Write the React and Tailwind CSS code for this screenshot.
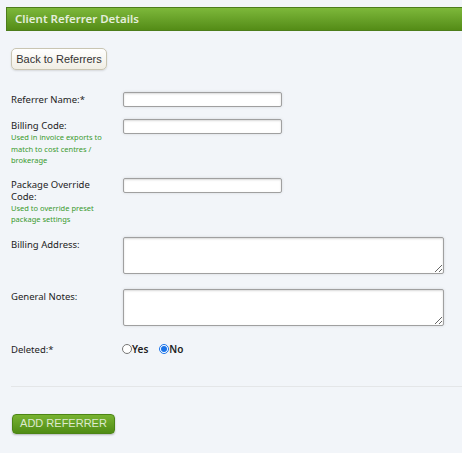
import React, { useState } from 'react';

const Help = ({ children }) => (
  <p className="text-[7.5px] leading-[11.5px] text-[#3a9a2e] w-[92px]">{children}</p>
);

const inputCls =
  "w-[159px] h-[15px] bg-white border border-[#a0a0a0] rounded-[2px] shadow-[inset_0_1px_2px_rgba(0,0,0,0.15),0_0_3px_rgba(0,0,0,0.12)] outline-none";
const areaCls =
  "w-[321px] h-[37px] bg-white border border-[#a0a0a0] rounded-[2px] shadow-[inset_0_1px_2px_rgba(0,0,0,0.15),0_0_3px_rgba(0,0,0,0.12)] outline-none resize";

const App = () => {
  const [deleted, setDeleted] = useState('no');

  return (
    <div className="min-h-screen w-full bg-[#f2f5f9] font-['Noto_Sans',sans-serif] text-[#222] overflow-hidden">
      <div className="pt-[7px] pl-[6px]">
        {/* Header bar */}
        <div className="h-[24px] border border-[#4d7d1c] border-r-0 bg-gradient-to-b from-[#7db83a] to-[#548c16] flex items-center pl-[8px]">
          <h1 className="text-[11.5px] font-semibold text-[#e4eedc]">Client Referrer Details</h1>
        </div>
      </div>

      <div className="pl-[11px]">
        {/* Back button */}
        <button
          type="button"
          className="mt-[17px] h-[22px] w-[96px] rounded-[5px] border border-[#c9c5b2] bg-gradient-to-b from-white to-[#f1eee4] shadow-[0_1px_2px_rgba(0,0,0,0.12)] font-['Liberation_Sans',sans-serif] text-[11px] text-[#333]"
        >
          Back to Referrers
        </button>

        <form className="mt-[22px] flex flex-col">
          {/* Referrer name */}
          <div className="flex items-start">
            <label className="w-[112px] text-[9.5px] leading-[13px] pt-[1px]">Referrer Name:*</label>
            <input type="text" className={inputCls} />
          </div>

          {/* Billing code */}
          <div className="flex items-start mt-[12px]">
            <div className="w-[112px]">
              <label className="text-[9.5px] leading-[12px] block pt-[1px]">Billing Code:</label>
              <Help>Used in invoice exports to match to cost centres / brokerage</Help>
            </div>
            <input type="text" className={inputCls} />
          </div>

          {/* Package override */}
          <div className="flex items-start mt-[11px]">
            <div className="w-[112px]">
              <label className="text-[9.5px] leading-[12px] block pt-[1px] w-[100px]">Package Override Code:</label>
              <Help>Used to override preset package settings</Help>
            </div>
            <input type="text" className={inputCls} />
          </div>

          {/* Billing address */}
          <div className="flex items-start mt-[11px]">
            <label className="w-[112px] text-[9.5px] leading-[13px] pt-[1px]">Billing Address:</label>
            <textarea className={areaCls} />
          </div>

          {/* General notes */}
          <div className="flex items-start mt-[15px]">
            <label className="w-[112px] text-[9.5px] leading-[13px] pt-[1px]">General Notes:</label>
            <textarea className={areaCls} />
          </div>

          {/* Deleted */}
          <div className="flex items-center mt-[16px]">
            <label className="w-[111px] text-[9.5px] leading-[13px]">Deleted:*</label>
            <label className="flex items-center text-[10px] font-semibold">
              <input
                type="radio"
                name="deleted"
                checked={deleted === 'yes'}
                onChange={() => setDeleted('yes')}
                className="w-[10px] h-[10px] m-0 accent-[#1a73e8]"
              />
              Yes
            </label>
            <label className="flex items-center text-[10px] font-semibold ml-[11px]">
              <input
                type="radio"
                name="deleted"
                checked={deleted === 'no'}
                onChange={() => setDeleted('no')}
                className="w-[10px] h-[10px] m-0 accent-[#1a73e8]"
              />
              No
            </label>
          </div>

          <div className="mt-[29px] border-t border-[#e4e6e8]" />

          <div className="mt-[27px] pl-[1px] flex">
            <button
              type="button"
              className="h-[20px] w-[103px] rounded-[4px] border border-[#4c8515] bg-gradient-to-b from-[#78b331] to-[#508c14] shadow-[0_1px_2px_rgba(0,0,0,0.25)] font-['Liberation_Sans',sans-serif] text-[11px] text-[#dde9cf]"
            >
              ADD REFERRER
            </button>
          </div>
        </form>
      </div>
    </div>
  );
};

export default App;
